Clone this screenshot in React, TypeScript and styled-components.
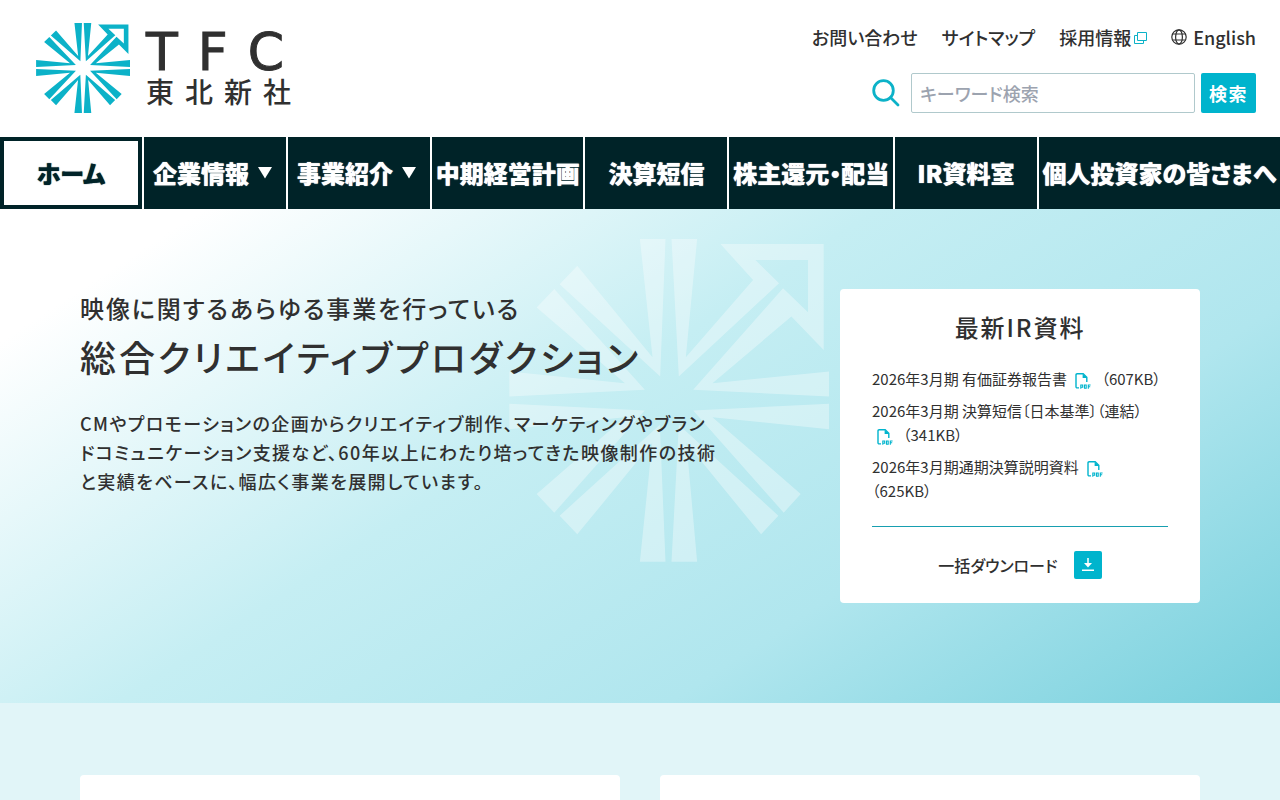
import React from "react";
import styled, { createGlobalStyle } from "styled-components";

const Global = createGlobalStyle`
  * { box-sizing: border-box; }
  body {
    margin: 0;
    background: #e1f5f8;
    color: #303030;
    font-family: "Noto Sans CJK JP", "Noto Sans", sans-serif;
    font-feature-settings: "palt";
    font-weight: 500;
  }
  a { color: inherit; text-decoration: none; }
  h1, h2, p, ul { margin: 0; padding: 0; font-weight: inherit; }
  ul { list-style: none; }
  button, input { font: inherit; font-feature-settings: inherit; }
`;

const Header = styled.header`
  display: flex;
  justify-content: space-between;
  align-items: flex-start;
  min-height: 137px;
  padding: 23px 24px 0 36px;
  background: #fff;
`;
const LogoLink = styled.a`
  display: flex;
  gap: 16px;
`;
const Wordmark = styled.span`
  display: flex;
  flex-direction: column;
  padding-top: 4px;
`;
const LatinName = styled.span`
  font-family: "DejaVu Sans", sans-serif;
  font-size: 52px;
  line-height: 50px;
  font-weight: 400;
  letter-spacing: 20px;
  -webkit-text-stroke: 1px currentColor;
`;
const KanjiName = styled.span`
  font-size: 28px;
  line-height: 28px;
  font-weight: 500;
  letter-spacing: 11px;
`;
const Tools = styled.div`
  display: flex;
  flex-direction: column;
  align-items: flex-end;
  gap: 22px;
`;
const UtilityNav = styled.nav`
  display: flex;
  align-items: center;
  gap: 24px;
  font-size: 18px;
  line-height: 28px;
`;
const UtilityLink = styled.a<{ $gap?: number }>`
  display: flex;
  align-items: center;
  gap: ${(p) => p.$gap ?? 0}px;
`;
const SearchForm = styled.form`
  display: flex;
  align-items: center;
`;
const SearchLabel = styled.label`
  display: flex;
  margin-right: 11px;
`;
const SearchInput = styled.input`
  width: 284px;
  height: 40px;
  padding: 0 8px;
  border: 1px solid #b0c9cc;
  border-radius: 2px;
  background: #fff;
  font-size: 18px;
  &::placeholder { color: #9ca3af; opacity: 1; }
`;
const SearchButton = styled.button`
  height: 40px;
  margin-left: 6px;
  padding: 0 8px;
  border: 0;
  border-radius: 2px;
  background: #00b4cd;
  color: #fff;
  font-size: 18px;
  font-weight: 700;
  letter-spacing: 0.08em;
`;

const MainNav = styled.nav`
  display: flex;
  gap: 2px;
  height: 72px;
  background: #fff;
`;
const NavItem = styled.a<{ $active?: boolean }>`
  flex: 1 1 auto;
  min-width: 142px;
  display: flex;
  justify-content: center;
  align-items: center;
  gap: 8px;
  padding: 0 3px;
  box-shadow: inset 0 0 0 4px #002328;
  background: ${(p) => (p.$active ? "#fff" : "#002328")};
  color: ${(p) => (p.$active ? "#002328" : "#fff")};
  font-size: 24px;
  line-height: 36px;
  font-weight: 900;
  text-shadow: 0 0 1px currentColor;
  white-space: nowrap;
  svg { margin-right: 4px; }
`;

const Hero = styled.section`
  position: relative;
  display: flex;
  justify-content: space-between;
  align-items: flex-start;
  min-height: 494px;
  padding: 80px;
  background: linear-gradient(147deg, #fff 10%, #c5eef3 43%, #b0e6ee 70%, #78d0dd 100%);
`;
const Watermark = styled.div`
  position: absolute;
  top: 30px;
  left: 509px;
  svg { display: block; }
`;
const Intro = styled.div`
  position: relative;
  width: 640px;
`;
const Lead = styled.p`
  font-size: 24px;
  line-height: 38px;
  letter-spacing: 0.08em;
`;
const Title = styled.h1`
  font-size: 36px;
  line-height: 58px;
  letter-spacing: 0.08em;
  white-space: nowrap;
`;
const Copy = styled.p`
  margin-top: 24px;
  font-size: 18px;
  line-height: 29px;
  letter-spacing: 0.08em;
`;

const Card = styled.aside`
  position: relative;
  width: 360px;
  padding: 20px 32px 24px;
  border-radius: 4px;
  background: #fff;
`;
const CardTitle = styled.h2`
  text-align: center;
  font-size: 24px;
  line-height: 36px;
  letter-spacing: 0.08em;
`;
const Docs = styled.ul`
  display: grid;
  gap: 8px;
  margin-top: 22px;
  padding-bottom: 23px;
  border-bottom: 1px solid #179fb0;
  font-size: 15px;
  line-height: 24px;
  font-weight: 400;
  svg { margin: 0 10px 0 5px; vertical-align: -4px; }
`;
const Download = styled.a`
  display: flex;
  justify-content: center;
  align-items: center;
  gap: 16px;
  margin-top: 24px;
  font-size: 16px;
  line-height: 28px;
`;
const DownloadBadge = styled.span`
  display: flex;
  border-radius: 2px;
  background: #00b4cd;
`;

const Panels = styled.section`
  display: grid;
  grid-template-columns: 1fr 1fr;
  gap: 40px;
  padding: 72px 80px;
`;
const Panel = styled.div`
  min-height: 240px;
  border-radius: 4px;
  background: #fff;
`;

const Emblem = ({ width, height, color, opacity }: { width: number; height: number; color: string; opacity: number }) => (
  <svg width={width} height={height} viewBox="57 57 961 970" preserveAspectRatio="none" fill={color} opacity={opacity} aria-hidden="true">
    <path d="M450 57H527L511 470L209 193L262 137L488 412Z" />
    <path d="M140 263L193 207L465 510L58 530V455L405 490Z" />
    <path d="M58 552V628L405 592L140 823L193 879L465 572Z" />
    <path d="M527 1026H450L487 670L262 944L209 888L510 615Z" />
    <path d="M545 1026H622L590 670L814 944L866 888L567 615Z" />
    <path d="M610 572L1018 552V628L668 592L933 823L882 879Z" />
    <path d="M545 57H622L588 412L790 180L692 72H1002V390L905 290L668 490L1018 455V530L610 510L880 205L955 277V120H797L868 190L567 470Z" />
  </svg>
);

const ExternalIcon = () => (
  <svg width="13" height="13" viewBox="0 0 13 13" fill="none" stroke="#0cb2c8" strokeWidth="1" aria-hidden="true">
    <path d="M3.5 1.5H12.5V9.5H3.5ZM3.5 4.5H.5V12.5H9.5V9.5" />
  </svg>
);

const GlobeIcon = () => (
  <svg width="16" height="16" viewBox="0 0 16 16" fill="none" stroke="#303030" strokeWidth="1.2" aria-hidden="true">
    <circle cx="8" cy="8" r="7.2" />
    <ellipse cx="8" cy="8" rx="3.4" ry="7.2" />
    <path d="M1.6 5H14.4M1.6 11H14.4" />
  </svg>
);

const PdfIcon = () => (
  <svg width="16" height="16" viewBox="0 0 16 16" fill="none" stroke="#00b4cd" role="img" aria-label="PDF">
    <path d="M4 14.9H2.2Q1 14.9 1 13.7V2Q1 .8 2.2 .8H8.2L11.8 4.4V9" strokeWidth="1.4" />
    <path d="M7.6 1V5H12Z" fill="#00b4cd" stroke="none" />
    <path d="M5.8 15.8V12H7.7V14.2H5.8M9.5 11.6V15.2H11.2V12H9.5M13.3 15.8V12H15.6M13.3 13.8H15.2" strokeWidth="1.1" />
  </svg>
);

const docs = [
  ["2026年3月期 有価証券報告書", "（607KB）"],
  ["2026年3月期 決算短信〔日本基準〕（連結）", "（341KB）"],
  ["2026年3月期通期決算説明資料", "（625KB）"],
];
const navItems = [
  { label: "ホーム", active: true },
  { label: "企業情報", menu: true },
  { label: "事業紹介", menu: true },
  { label: "中期経営計画" },
  { label: "決算短信" },
  { label: "株主還元・配当" },
  { label: "IR資料室" },
  { label: "個人投資家の皆さまへ" },
];

export default function App() {
  return (
    <>
      <Global />
      <Header>
        <LogoLink href="#">
          <Emblem width={94} height={90} color="#0cb2c8" opacity={1} />
          <Wordmark>
            <LatinName>TFC</LatinName>
            <KanjiName>東北新社</KanjiName>
          </Wordmark>
        </LogoLink>
        <Tools>
          <UtilityNav>
            <UtilityLink href="#">お問い合わせ</UtilityLink>
            <UtilityLink href="#">サイトマップ</UtilityLink>
            <UtilityLink href="#" $gap={3}>採用情報<ExternalIcon /></UtilityLink>
            <UtilityLink href="#" $gap={6}><GlobeIcon />English</UtilityLink>
          </UtilityNav>
          <SearchForm>
            <SearchLabel htmlFor="q" aria-label="キーワード検索">
              <svg width="28" height="28" viewBox="0 0 28 28" fill="none" stroke="#0cb2c8" strokeWidth="2.8" aria-hidden="true">
                <circle cx="11.5" cy="11.5" r="9.8" />
                <path d="M18.5 18.5L26 26" strokeLinecap="round" />
              </svg>
            </SearchLabel>
            <SearchInput id="q" placeholder="キーワード検索" />
            <SearchButton>検索</SearchButton>
          </SearchForm>
        </Tools>
      </Header>
      <MainNav>
        {navItems.map((n) => (
          <NavItem href="#" key={n.label} $active={n.active}>
            {n.label}
            {n.menu && (
              <svg width="16" height="12" viewBox="0 0 16 12" fill="#fff" aria-hidden="true">
                <path d="M1 0H15L8 11.5Z" />
              </svg>
            )}
          </NavItem>
        ))}
      </MainNav>
      <Hero>
        <Watermark><Emblem width={320} height={323} color="#fff" opacity={0.35} /></Watermark>
        <Intro>
          <Lead>映像に関するあらゆる事業を行っている</Lead>
          <Title>総合クリエイティブプロダクション</Title>
          <Copy>CMやプロモーションの企画からクリエイティブ制作、マーケティングやブランドコミュニケーション支援など、60年以上にわたり培ってきた映像制作の技術と実績をベースに、幅広く事業を展開しています。</Copy>
        </Intro>
        <Card>
          <CardTitle>最新IR資料</CardTitle>
          <Docs>
            {docs.map(([title, size]) => (
              <li key={title}><a href="#">{title} <PdfIcon />{size}</a></li>
            ))}
          </Docs>
          <Download href="#">
            一括ダウンロード
            <DownloadBadge>
              <svg width="28" height="28" viewBox="0 0 28 28" fill="none" stroke="#fff" strokeWidth="1.5" aria-hidden="true">
                <path d="M14 7V14M8 19.2H20" />
                <path d="M10 12H18L14 16.5Z" fill="#fff" stroke="none" />
              </svg>
            </DownloadBadge>
          </Download>
        </Card>
      </Hero>
      <Panels><Panel /><Panel /></Panels>
    </>
  );
}
